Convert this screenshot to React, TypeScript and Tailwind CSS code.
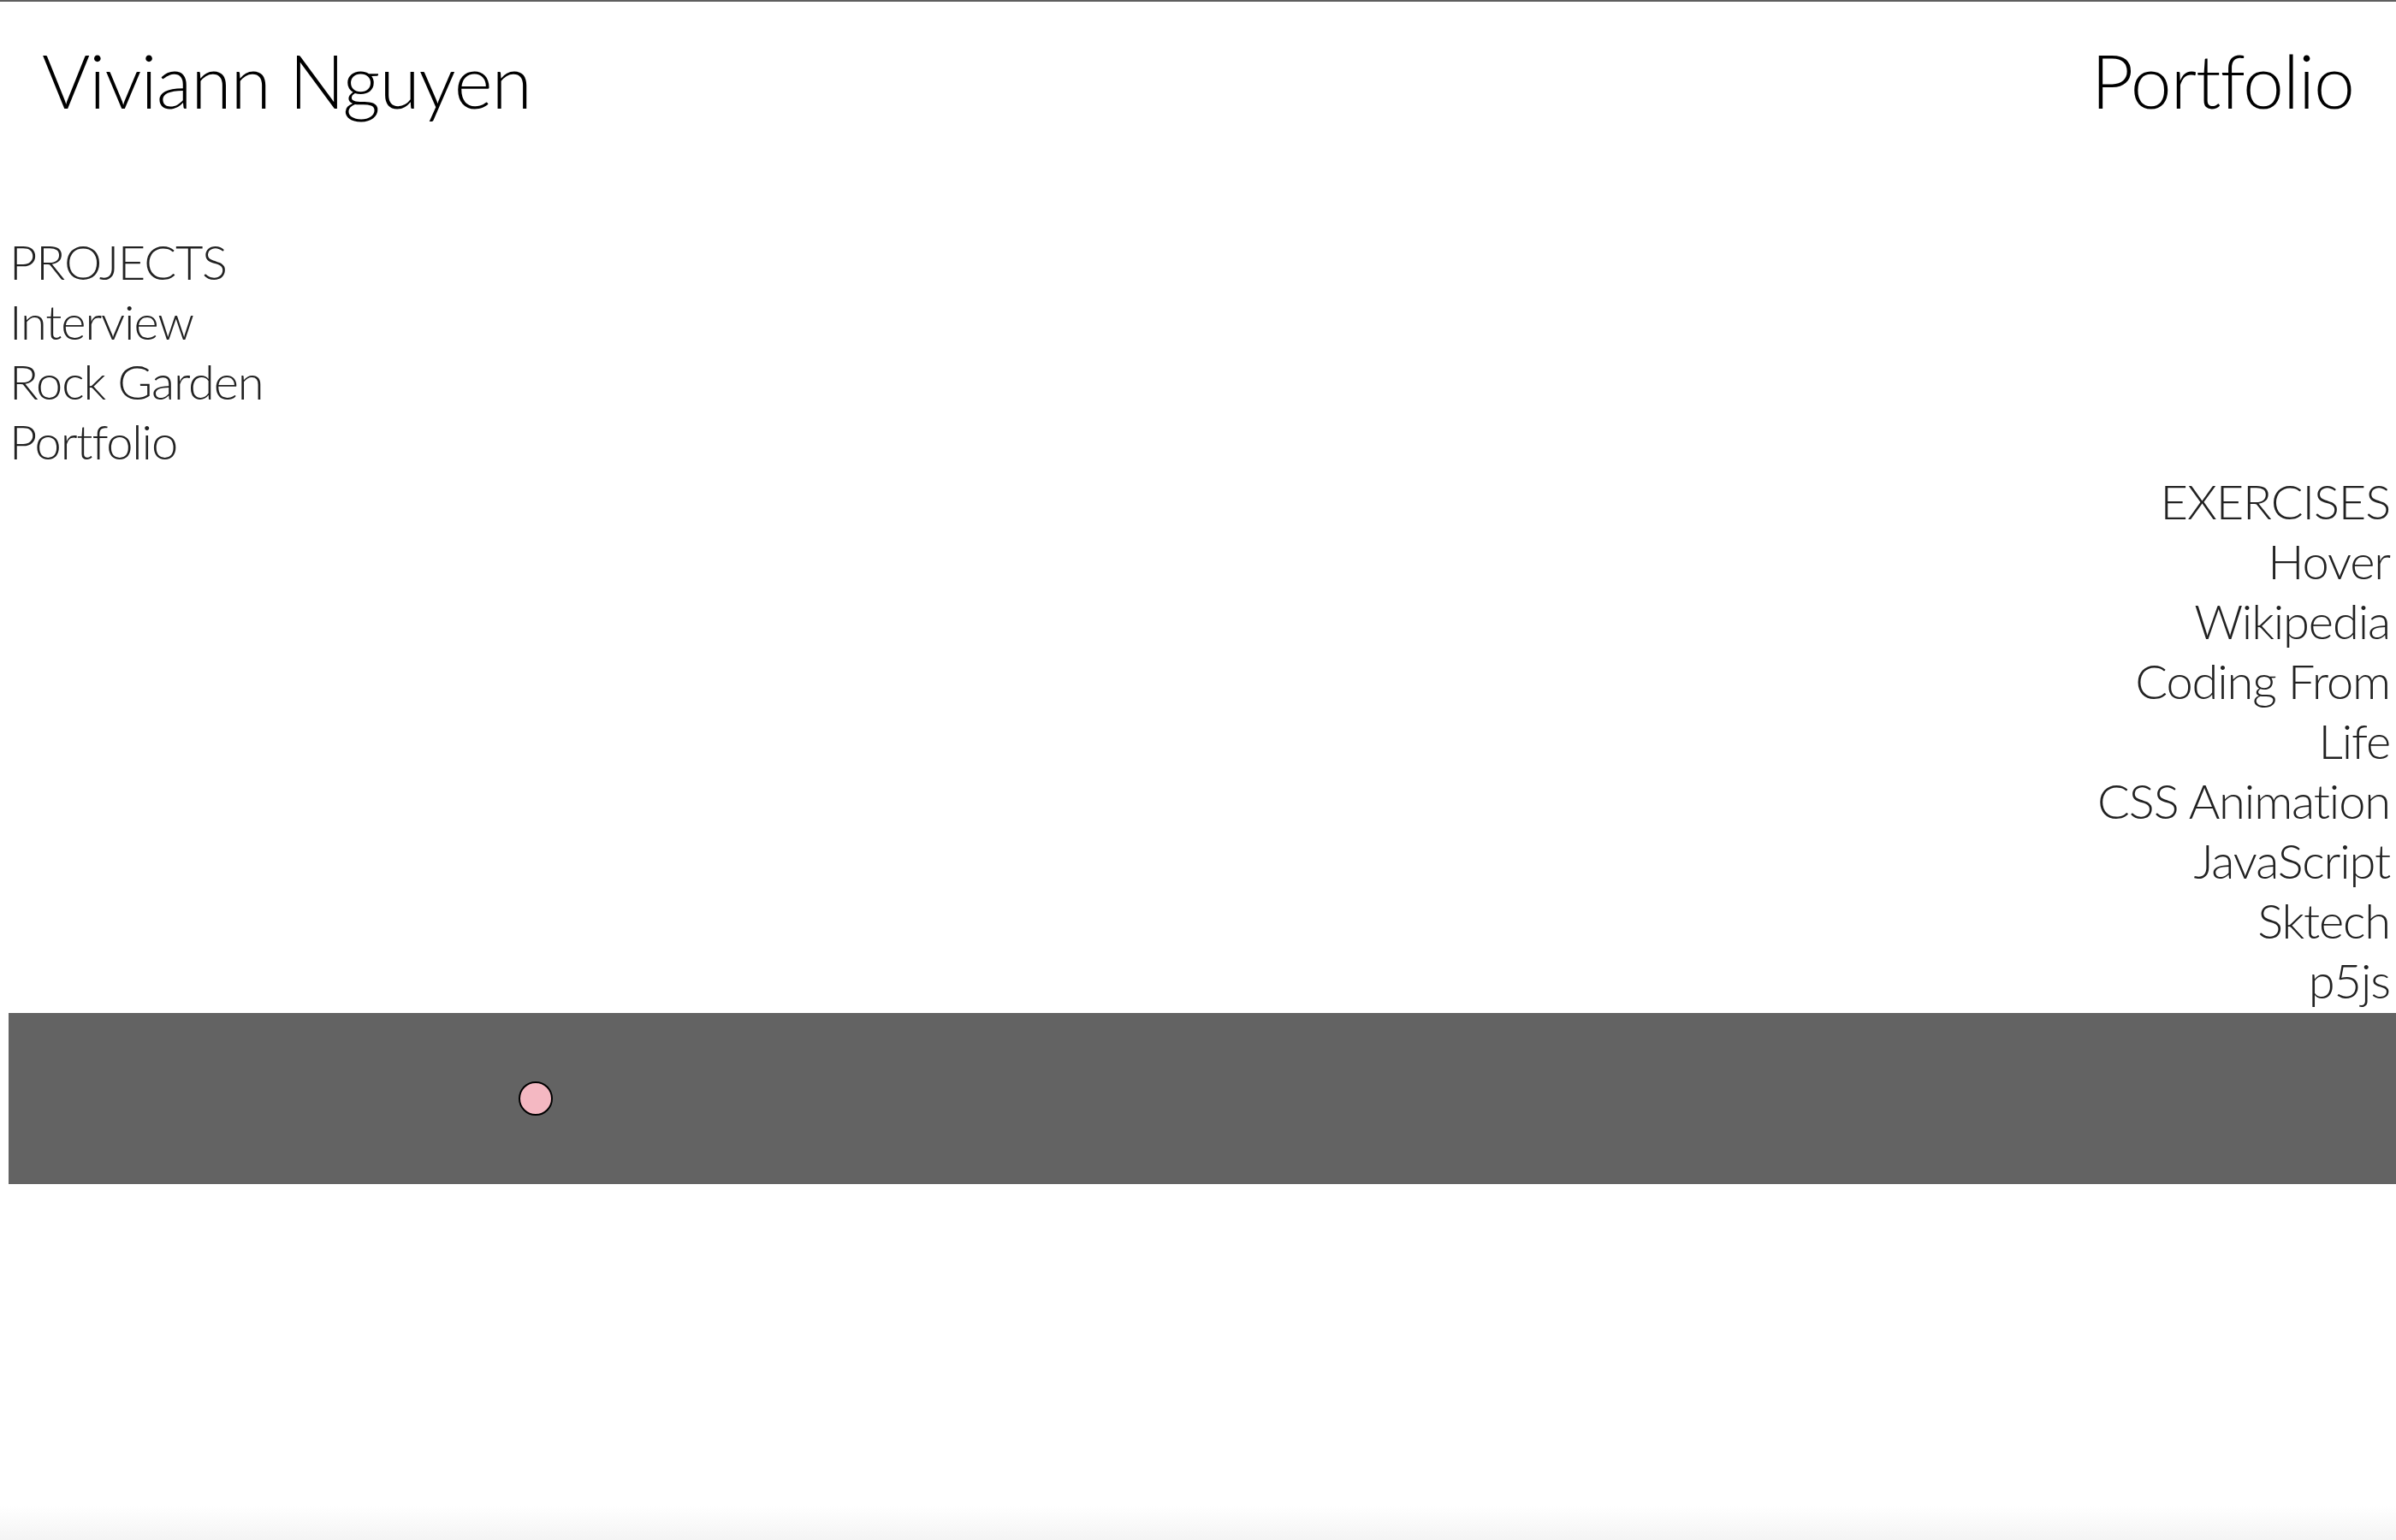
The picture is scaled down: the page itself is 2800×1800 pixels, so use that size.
const projects = ['PROJECTS', 'Interview', 'Rock Garden', 'Portfolio'];
const exercises = ['EXERCISES', 'Hover', 'Wikipedia', 'Coding From', 'Life', 'CSS Animation', 'JavaScript', 'Sktech', 'p5js'];

export default function App() {
  return (
    <div
      className="flex min-h-screen flex-col border-t-2 border-[#5f5f5f] bg-white text-black"
      style={{ fontFamily: 'Lato, "Open Sans", sans-serif' }}
    >
      {/* Header */}
      <header className="flex items-start justify-between px-[49px] pt-[40px] text-[86px] font-light leading-[103px] tracking-[-0.012em]">
        <h1>Viviann Nguyen</h1>
        <h2>Portfolio</h2>
      </header>

      {/* Projects */}
      <nav className="mt-[126px] flex flex-col items-start pl-[11px] text-[56px] font-light leading-[70px] tracking-[-0.02em] text-[#222]">
        {projects.map(p => (
          <a key={p}>{p}</a>
        ))}
      </nav>

      {/* Exercises */}
      <nav className="flex flex-col items-end pr-[7px] text-[56px] font-light leading-[70px] tracking-[-0.02em] text-[#222]">
        {exercises.map(e => (
          <a key={e}>{e}</a>
        ))}
      </nav>

      {/* Sketch canvas */}
      <div className="ml-[10px] mt-[3px] flex h-[200px] items-center bg-[#636363] pl-[596px]">
        <div className="h-[40px] w-[40px] rounded-full border-2 border-black bg-[#f4b8c2]" />
      </div>

      <div className="flex-1" />
      <div className="h-[40px] bg-gradient-to-b from-white to-[#f4f4f4]" />
    </div>
  );
}
